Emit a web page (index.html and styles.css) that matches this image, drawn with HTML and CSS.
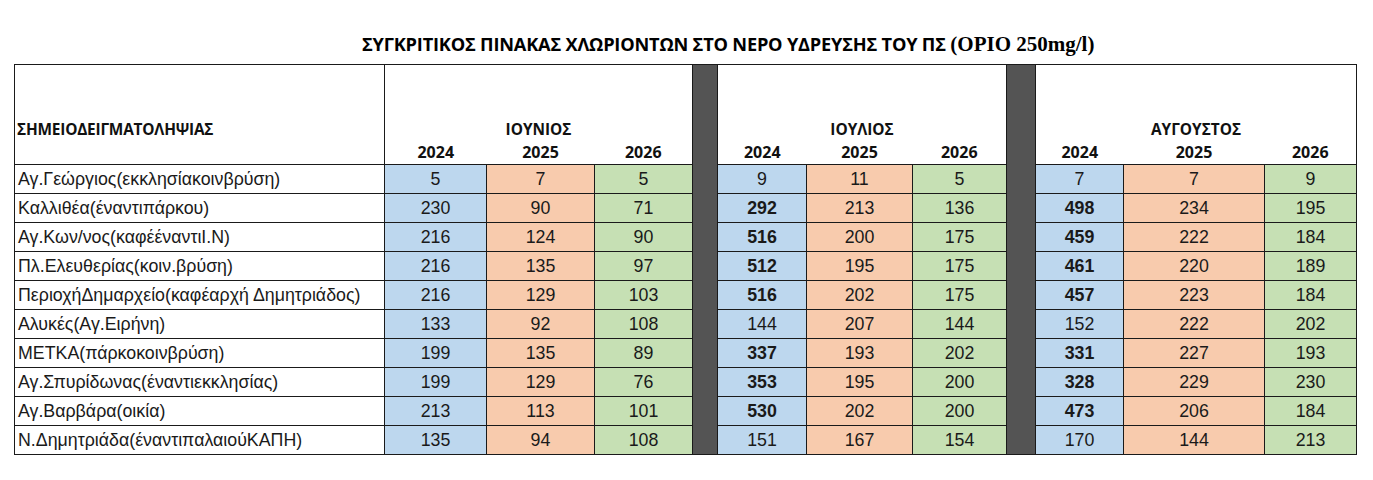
FILE: index.html
```html
<!DOCTYPE html>
<html lang="el">
<head>
<meta charset="utf-8">
<title>Χλωριόντα</title>
<link rel="stylesheet" href="styles.css">
</head>
<body>
<h1 class="title"><span class="t-main">ΣΥΓΚΡΙΤΙΚΟΣ ΠΙΝΑΚΑΣ ΧΛΩΡΙΟΝΤΩΝ ΣΤΟ ΝΕΡΟ ΥΔΡΕΥΣΗΣ ΤΟΥ ΠΣ </span><span class="t-limit">(ΟΡΙΟ 250mg/l)</span></h1>
<table class="grid">
<colgroup>
<col class="c-point">
<col class="c-jun1"><col class="c-jun2"><col class="c-jun3">
<col class="c-sep1">
<col class="c-jul1"><col class="c-jul2"><col class="c-jul3">
<col class="c-sep2">
<col class="c-aug1"><col class="c-aug2"><col class="c-aug3">
</colgroup>
<tbody>
<tr class="h-month">
<th class="h-point">ΣΗΜΕΙΟΔΕΙΓΜΑΤΟΛΗΨΙΑΣ</th>
<th class="h-m" colspan="3">ΙΟΥΝΙΟΣ</th>
<th class="sep" rowspan="12"></th>
<th class="h-m" colspan="3">ΙΟΥΛΙΟΣ</th>
<th class="sep" rowspan="12"></th>
<th class="h-m" colspan="3">ΑΥΓΟΥΣΤΟΣ</th>
</tr>
<tr class="h-year">
<th class="h-point-empty"></th>
<th class="y">2024</th><th class="y">2025</th><th class="y">2026</th>
<th class="y">2024</th><th class="y">2025</th><th class="y">2026</th>
<th class="y">2024</th><th class="y">2025</th><th class="y">2026</th>
</tr>
<tr><td class="name">Αγ.Γεώργιος(εκκλησίακοινβρύση)</td><td class="b">5</td><td class="o">7</td><td class="g">5</td><td class="b">9</td><td class="o">11</td><td class="g">5</td><td class="b">7</td><td class="o">7</td><td class="g">9</td></tr>
<tr><td class="name">Καλλιθέα(έναντιπάρκου)</td><td class="b">230</td><td class="o">90</td><td class="g">71</td><td class="b hi">292</td><td class="o">213</td><td class="g">136</td><td class="b hi">498</td><td class="o">234</td><td class="g">195</td></tr>
<tr><td class="name">Αγ.Κων/νος(καφέέναντιΙ.Ν)</td><td class="b">216</td><td class="o">124</td><td class="g">90</td><td class="b hi">516</td><td class="o">200</td><td class="g">175</td><td class="b hi">459</td><td class="o">222</td><td class="g">184</td></tr>
<tr><td class="name">Πλ.Ελευθερίας(κοιν.βρύση)</td><td class="b">216</td><td class="o">135</td><td class="g">97</td><td class="b hi">512</td><td class="o">195</td><td class="g">175</td><td class="b hi">461</td><td class="o">220</td><td class="g">189</td></tr>
<tr><td class="name">ΠεριοχήΔημαρχείο(καφέαρχή Δημητριάδος)</td><td class="b">216</td><td class="o">129</td><td class="g">103</td><td class="b hi">516</td><td class="o">202</td><td class="g">175</td><td class="b hi">457</td><td class="o">223</td><td class="g">184</td></tr>
<tr><td class="name">Αλυκές(Αγ.Ειρήνη)</td><td class="b">133</td><td class="o">92</td><td class="g">108</td><td class="b">144</td><td class="o">207</td><td class="g">144</td><td class="b">152</td><td class="o">222</td><td class="g">202</td></tr>
<tr><td class="name">ΜΕΤΚΑ(πάρκοκοινβρύση)</td><td class="b">199</td><td class="o">135</td><td class="g">89</td><td class="b hi">337</td><td class="o">193</td><td class="g">202</td><td class="b hi">331</td><td class="o">227</td><td class="g">193</td></tr>
<tr><td class="name">Αγ.Σπυρίδωνας(έναντιεκκλησίας)</td><td class="b">199</td><td class="o">129</td><td class="g">76</td><td class="b hi">353</td><td class="o">195</td><td class="g">200</td><td class="b hi">328</td><td class="o">229</td><td class="g">230</td></tr>
<tr><td class="name">Αγ.Βαρβάρα(οικία)</td><td class="b">213</td><td class="o">113</td><td class="g">101</td><td class="b hi">530</td><td class="o">202</td><td class="g">200</td><td class="b hi">473</td><td class="o">206</td><td class="g">184</td></tr>
<tr><td class="name">Ν.Δημητριάδα(έναντιπαλαιούΚΑΠΗ)</td><td class="b">135</td><td class="o">94</td><td class="g">108</td><td class="b">151</td><td class="o">167</td><td class="g">154</td><td class="b">170</td><td class="o">144</td><td class="g">213</td></tr>
</tbody>
</table>
</body>
</html>
```
FILE: styles.css
```css
html, body {
  margin: 0;
  padding: 0;
  background: #ffffff;
  color: #000000;
}

.title {
  margin: 0;
  padding: 28px 0 0 362px;
  height: 24px;
  line-height: 24px;
  font-weight: bold;
  white-space: nowrap;
}

.t-main {
  font-family: "Open Sans", "Noto Sans", sans-serif;
  font-size: 18.2px;
  letter-spacing: -0.2px;
}

.t-limit {
  font-family: "Liberation Serif", "Times New Roman", serif;
  font-size: 21px;
}

.grid {
  margin: 12px 0 0 14px;
  width: 1342px;
  table-layout: fixed;
  border-collapse: collapse;
  border: 1px solid #1a1a1a;
}

.c-point { width: 370px; }
.c-jun1 { width: 102px; }
.c-jun2 { width: 108px; }
.c-jun3 { width: 98px; }
.c-sep1 { width: 25px; }
.c-jul1 { width: 89px; }
.c-jul2 { width: 106px; }
.c-jul3 { width: 94px; }
.c-sep2 { width: 29px; }
.c-aug1 { width: 88px; }
.c-aug2 { width: 141px; }
.c-aug3 { width: 92px; }

.grid th {
  font-family: "Open Sans", "Noto Sans", sans-serif;
  font-weight: bold;
  color: #111;
  padding: 0;
  border: none;
}

.h-month {
  height: 76px;
}

.h-month th {
  vertical-align: bottom;
  line-height: 22px;
}

.grid .h-point {
  text-align: left;
  padding-left: 2px;
  font-size: 15.4px;
  letter-spacing: -0.2px;
  border-right: 1px solid #1a1a1a;
}

.grid .h-point-empty {
  border-right: 1px solid #1a1a1a;
}

.h-m {
  font-size: 15.4px;
  text-align: center;
}

.h-year {
  height: 24px;
}

.grid .y {
  font-size: 16px;
  text-align: center;
  vertical-align: middle;
  line-height: 20px;
}

.grid .sep {
  background: #545454;
  border-left: 1px solid #1a1a1a;
  border-right: 1px solid #1a1a1a;
}

.grid td {
  height: 28px;
  padding: 0;
  border: 1px solid #1a1a1a;
  font-family: "Liberation Sans", Arial, sans-serif;
  font-size: 17.8px;
  color: #1a1a1a;
  text-align: center;
  vertical-align: middle;
  white-space: nowrap;
}

.grid td.name {
  text-align: left;
  padding-left: 3px;
  background: #ffffff;
}

.grid td.b { background: #bdd7ee; }
.grid td.o { background: #f8cbad; }
.grid td.g { background: #c6e0b4; }
.grid td.hi { font-weight: bold; }
```
